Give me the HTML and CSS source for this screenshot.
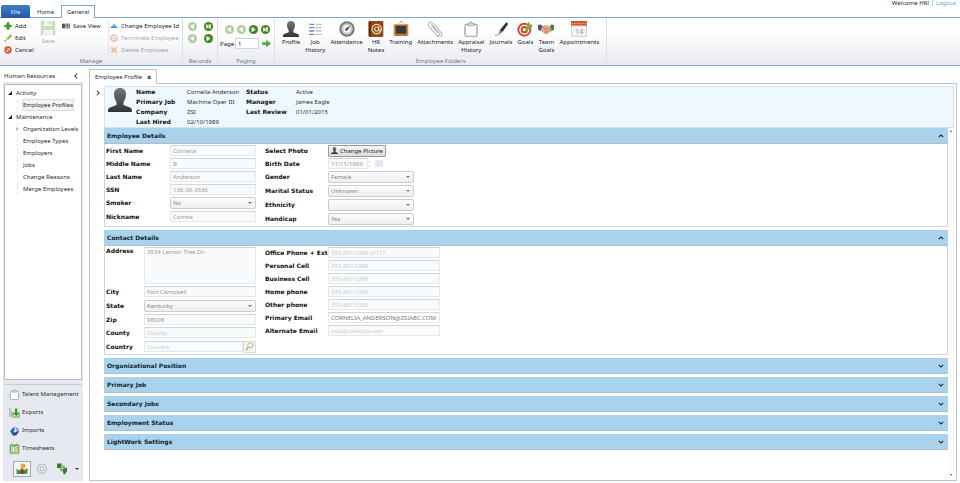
FILE: index.html
```html
<!DOCTYPE html>
<html lang="en">
<head>
<meta charset="utf-8">
<title>Employee Profile</title>
<link rel="stylesheet" href="styles.css">
</head>
<body>
<svg class="sprite" aria-hidden="true">
  <symbol id="person" viewBox="0 0 24 24"><path fill="url(#dark)" d="M12 0c4 0 6 2.600 6 6.500 0 3.500-1.200 5.500-2.500 7.500v3c2 1.400 5.500 1.600 7.500 3 .8.800 1 2 1 4H0c0-2 .2-3.200 1-4 2-1.400 5.500-1.600 7.500-3v-3C7.200 12 6 10 6 6.500 6 2.600 8 0 12 0z"/></symbol>
  <symbol id="nav-next" viewBox="0 0 24 24"><circle cx="12" cy="12" r="12" fill="#3f7f1d"/><circle cx="11" cy="11" r="7" fill="#5f9a3d"/><path fill="#fff" d="M7 5l10 7-10 7z"/></symbol>
  <symbol id="nav-prev" viewBox="0 0 24 24"><circle cx="12" cy="12" r="12" fill="#3f7f1d"/><circle cx="11" cy="11" r="7" fill="#5f9a3d"/><path fill="#fff" d="M16 5L6 12l10 7z"/></symbol>
  <symbol id="nav-last" viewBox="0 0 24 24"><circle cx="12" cy="12" r="12" fill="#3f7f1d"/><circle cx="11" cy="11" r="7" fill="#5f9a3d"/><path fill="#fff" d="M6 6l8 6-8 6zM14 6h4v12h-4z"/></symbol>
  <symbol id="clipboard" viewBox="0 0 24 24"><path fill="#fff" stroke="#999" stroke-width="1.600" d="M3 7q0-2 2-2h14q2 0 2 2v14q0 2-2 2H5q-2 0-2-2z"/><path fill="#ddd" stroke="#888" d="M7 7V4h3q0-3 2-3t2 3h3v3z"/><path stroke="#aaa" d="M3 10v10M21 10v10"/></symbol>
  <symbol id="up" viewBox="0 0 8 8"><path fill="none" stroke="#222" stroke-width="1.400" d="M1 5.500l3-3 3 3"/></symbol>
  <symbol id="down" viewBox="0 0 8 8"><path fill="none" stroke="#222" stroke-width="1.400" d="M1 2.500l3 3 3-3"/></symbol>
  <defs><linearGradient id="dark" x2="0" y2="1"><stop stop-color="#777"/><stop offset="1" stop-color="#333"/></linearGradient></defs>
</svg>

<header class="top">
  <nav class="tabs">
    <button class="tab file">File</button>
    <button class="tab">Home</button>
    <button class="tab active">General</button>
  </nav>
  <div class="user"><span>Welcome HR!</span><i></i><a href="#logout">Logout</a></div>
</header>

<section class="ribbon">
  <div class="group manage">
    <div class="tools">
      <div class="stack">
        <button class="tool"><svg viewBox="0 0 24 24"><path fill="#3f9a28" d="M8 1h8v7h7v8h-7v7H8v-7H1V8h7z"/></svg>Add</button>
        <button class="tool"><svg viewBox="0 0 24 24"><path fill="#8bc34a" d="M7 13L17 3l5 5-10 10z"/><path fill="#d56a5a" d="M17 3l2-2 5 5-2 2z"/><path fill="#e9c98b" d="M7 13l5 5-7 2z"/><path fill="#5a9a3a" d="M1 20l4-3 1 5-5 1z"/></svg>Edit</button>
        <button class="tool"><svg viewBox="0 0 24 24"><circle cx="12" cy="12" r="11" fill="#d9552b"/><circle cx="12" cy="12" r="6" fill="#fbe9e2"/><path stroke="#d9552b" stroke-width="4" d="M6 6l12 12"/></svg>Cancel</button>
      </div>
      <button class="big save off"><svg viewBox="0 0 24 24"><path fill="#7fae62" d="M1 1h5v8h12V1h5v22h-4v-8H5v8H1z"/><path fill="#d7e6cd" d="M7 1h10v7H7zM6 16h12v7H6z"/><path fill="#7fae62" d="M13 2h3v5h-3z"/></svg>Save</button>
      <div class="stack view">
        <button class="tool"><svg viewBox="0 0 24 16"><path fill="#555" d="M0 1h24v14H0z"/><path fill="#ccc" d="M9 3h6v3H9zM9 8h6v5H9zM17 3h5v4h-5zM17 9h5v4h-5z"/></svg>Save View</button>
      </div>
      <div class="stack divided">
        <button class="tool"><svg viewBox="0 0 24 24"><path fill="#58aee8" d="M12 5l8 10H4z"/><path fill="#3d93d6" d="M2 14h20v4H2z"/></svg>Change Employee Id</button>
        <button class="tool off"><svg viewBox="0 0 24 24"><circle cx="12" cy="12" r="9" fill="#fff" stroke="#e46a45" stroke-width="5"/><path stroke="#e46a45" stroke-width="3" d="M8 8l8 8M16 8l-8 8"/></svg>Terminate Employee</button>
        <button class="tool off"><svg viewBox="0 0 24 24"><path stroke="#e46a45" stroke-width="6" d="M4 4l16 16M20 4L4 20"/></svg>Delete Employee</button>
      </div>
    </div>
    <h2>Manage</h2>
  </div>
  <div class="group records">
    <div class="tools">
      <div class="navs">
        <button class="nav off" aria-label="First"><svg><use href="#nav-prev"/></svg></button>
        <button class="nav" aria-label="Last"><svg><use href="#nav-last"/></svg></button>
        <button class="nav off" aria-label="Previous"><svg><use href="#nav-prev"/></svg></button>
        <button class="nav" aria-label="Next"><svg><use href="#nav-next"/></svg></button>
      </div>
    </div>
    <h2>Records</h2>
  </div>
  <div class="group paging">
    <div class="tools">
      <div class="pages">
        <button class="nav off" aria-label="First page"><svg><use href="#nav-prev"/></svg></button>
        <button class="nav off" aria-label="Previous page"><svg><use href="#nav-prev"/></svg></button>
        <button class="nav" aria-label="Next page"><svg><use href="#nav-next"/></svg></button>
        <button class="nav" aria-label="Last page"><svg><use href="#nav-last"/></svg></button>
      </div>
      <div class="goto">
        <label for="page">Page</label><input id="page" value="1">
        <button class="nav" aria-label="Go"><svg viewBox="0 0 24 24"><path fill="#5aa83a" stroke="#3d8a22" d="M1 9h11V3l11 9-11 9v-6H1z"/></svg></button>
      </div>
    </div>
    <h2>Paging</h2>
  </div>
  <div class="group folders">
    <div class="tools">
      <button class="big"><svg><use href="#person"/></svg>Profile</button>
      <button class="big"><svg viewBox="0 0 24 24"><path stroke="#5d8fd0" stroke-width="2" d="M3 5h8M3 10h8M3 15h8M3 20h8"/><path stroke="#b9c3cf" stroke-width="2" d="M13 5h9M13 10h9M13 15h9M13 20h9"/><path stroke="#e08a70" stroke-width="2" d="M3 5h3M3 15h3"/></svg>Job<br>History</button>
      <button class="big"><svg viewBox="0 0 24 24"><circle cx="12" cy="12" r="10" fill="#d3d7da" stroke="#777" stroke-width="3"/><circle cx="12" cy="12" r="6.500" fill="#f8f8f8" stroke="#aaa"/><path fill="#444" d="M17 7l-4 7-3-3z"/><circle cx="11" cy="13" r="2" fill="#666"/></svg>Attendance</button>
      <button class="big"><svg viewBox="0 0 24 24"><rect x="1" width="22" height="24" rx="2" fill="#8d4a17"/><path fill="#5a2a08" d="M1 1h3v22H1z"/><circle cx="13" cy="12" r="7" fill="none" stroke="#f3d9b8" stroke-width="1.800"/><circle cx="13" cy="12" r="3" fill="none" stroke="#f3d9b8" stroke-width="1.800"/><path fill="none" stroke="#f3d9b8" stroke-width="1.800" d="M16 8v6q2 2 4-1"/></svg>HR<br>Notes</button>
      <button class="big"><svg viewBox="0 0 24 24"><path stroke="#9ab" d="M12 1L6 5M12 1l6 4"/><circle cx="12" cy="1" r="1" fill="#58a"/><rect x="1" y="5" width="22" height="17" rx="1" fill="#d58b2e"/><path fill="#353b40" d="M4 7h16v12H4z"/><path fill="#b06b1c" d="M3 20h18v2H3z"/></svg>Training</button>
      <button class="big"><svg viewBox="0 0 24 24"><path fill="none" stroke="#b4b4b4" stroke-width="1.600" d="M6 4l12 14c2 3-2 6-4 3L3 8C0 3 6-1 9 3l12 14c4 6-3 9-5 6M7 7l9 11"/></svg>Attachments</button>
      <button class="big"><svg><use href="#clipboard"/></svg>Appraisal<br>History</button>
      <button class="big"><svg viewBox="0 0 24 24"><path fill="#333" d="M20 2l3 2-9 13-4-3z"/><path fill="#888" d="M10 14l4 3-6 4z"/><path stroke="#666" d="M3 22l6-2"/></svg>Journals</button>
      <button class="big"><svg viewBox="0 0 24 24"><circle cx="11" cy="13" r="9" fill="#fff" stroke="#d9472b" stroke-width="3"/><circle cx="11" cy="13" r="4" fill="#fff" stroke="#d9472b" stroke-width="3"/><path fill="#76b043" d="M12 14l5-13 3 4 4 2-9 8z"/></svg>Goals</button>
      <button class="big"><svg viewBox="0 0 28 24"><path fill="#e0a98a" d="M5 7l9-2 9 3 1 7-8 6-5-1-7-6z"/><path fill="#4d5a63" d="M0 5l5-1 3 3-4 9-4-3z"/><path fill="#4f7a45" d="M28 5l-5-1-2 3 3 9 4-3z"/><path fill="none" stroke="#a86c50" d="M9 8l4 5 4-3 5 5M11 19l3-4M14 20l3-4"/></svg>Team<br>Goals</button>
      <button class="big"><svg viewBox="0 0 24 24"><path fill="#f4f4f4" stroke="#bbb" d="M1 5h22v18H1z"/><path fill="#d9552b" d="M0 0h24v7H0z"/><path stroke="#fff" stroke-dasharray="2 2" d="M1 4h22"/><text x="6" y="19" font-size="11" fill="#999">14</text></svg>Appointments</button>
    </div>
    <h2>Employee Folders</h2>
  </div>
</section>

<main class="work">
  <aside class="side">
    <div class="side-head"><span>Human Resources</span><button aria-label="Collapse"><svg class="chev" viewBox="0 0 8 8"><path fill="none" stroke="#222" stroke-width="1.400" d="M5.500 1l-3 3 3 3"/></svg></button></div>
    <div class="side-body">
      <nav class="tree">
        <a href="#activity" class="root">Activity</a>
        <div class="branch"><a href="#profiles" class="current">Employee Profiles</a></div>
        <a href="#maintenance" class="root">Maintenance</a>
        <div class="branch">
          <a href="#levels" class="closed">Organization Levels</a>
          <a href="#types">Employee Types</a>
          <a href="#employers">Employers</a>
          <a href="#jobs">Jobs</a>
          <a href="#reasons">Change Reasons</a>
          <a href="#merge">Merge Employees</a>
        </div>
      </nav>
      <nav class="modules">
        <a href="#talent"><svg><use href="#clipboard"/></svg>Talent Management</a>
        <a href="#exports"><svg viewBox="0 0 24 24"><path fill="none" stroke="#999" stroke-width="2" d="M2 1v21M6 8v14"/><path fill="none" stroke="#7ab04e" stroke-width="3" d="M9 11v9q0 2 2 2h9q2 0 2-2v-9"/><path fill="#3f8f22" d="M13 3h5v10h4l-6 7-7-7h4z"/></svg>Exports</a>
        <a href="#imports"><svg viewBox="0 0 24 24"><path fill="#2f68b5" d="M2 13l9-9 2 6-3 4 4 3 8-4-6 10H8z"/><path fill="#7ba7dd" d="M13 2l9 7-2 7-6 1 2-6z"/><path fill="#1d4787" d="M8 23l8-2 6-8-9 4z"/></svg>Imports</a>
        <a href="#timesheets"><svg viewBox="0 0 24 24"><path fill="#e9f2e0" stroke="#78aa4f" stroke-width="3" d="M3 5h18v17H3z"/><circle cx="12" cy="13" r="6" fill="#fff" stroke="#78aa4f" stroke-width="2"/><path stroke="#78aa4f" stroke-width="2" d="M7 1v6M17 1v6M12 9v4l3 2"/></svg>Timesheets</a>
      </nav>
      <div class="switch">
        <button class="on" aria-label="Human Resources"><svg viewBox="0 0 24 24"><circle cx="14" cy="6" r="5" fill="#f2a23a"/><path fill="#4d8f3a" d="M1 12l6 3 5-5 4 4 7-4v9q0 3-3 3H4q-3 0-3-3z"/><path fill="#75502f" d="M8 15l4-4 4 5-1 6H9z"/></svg></button>
        <button aria-label="Settings"><svg viewBox="0 0 24 24"><circle cx="12" cy="12" r="9" fill="#ececec" stroke="#bbb" stroke-width="3" stroke-dasharray="4 1"/><circle cx="12" cy="12" r="4" fill="#fff" stroke="#aaa" stroke-width="2"/></svg></button>
        <button aria-label="Links"><svg viewBox="0 0 24 24"><path fill="#3b7d2b" d="M2 1h9v9H2zM12 12l10-3v8l-6 7z"/><path fill="#86b86f" d="M6 11h6v6H9zM12 5h6v5h-6z"/></svg></button>
        <button class="more" aria-label="More"></button>
      </div>
    </div>
  </aside>

  <section class="pane">
    <div class="doc-tabs"><button class="doc-tab">Employee Profile <b>x</b></button></div>
    <div class="doc">
      <button class="expand" aria-label="Expand"><svg class="chev" viewBox="0 0 8 8"><path fill="none" stroke="#222" stroke-width="1.400" d="M2.500 1l3 3-3 3"/></svg></button>
      <div class="content">
        <div class="summary">
          <svg><use href="#person"/></svg>
          <dl>
            <dt>Name</dt><dd>Cornelia Anderson</dd><dt>Status</dt><dd>Active</dd>
            <dt>Primary Job</dt><dd>Machine Oper III</dd><dt>Manager</dt><dd>James Eagle</dd>
            <dt>Company</dt><dd>ZSI</dd><dt>Last Review</dt><dd>01/01/2015</dd>
            <dt>Last Hired</dt><dd>02/10/1989</dd>
          </dl>
        </div>
        <div class="scroller">
          <div class="sections">
            <article class="open">
              <button class="bar">Employee Details<svg class="chev"><use href="#up"/></svg></button>
              <div class="form details">
                <div class="col">
                  <div class="row"><label for="first">First Name</label><input id="first" value="Cornelia"></div>
                  <div class="row"><label for="middle">Middle Name</label><input id="middle" value="B"></div>
                  <div class="row"><label for="last">Last Name</label><input id="last" value="Anderson"></div>
                  <div class="row"><label for="ssn">SSN</label><input id="ssn" value="136-36-3636"></div>
                  <div class="row pick"><label for="smoker">Smoker</label><span class="select"><select id="smoker"><option>No</option></select></span></div>
                  <div class="row"><label for="nick">Nickname</label><input id="nick" value="Connie"></div>
                </div>
                <div class="col">
                  <div class="row"><label for="photo">Select Photo</label><button id="photo" class="photo"><svg><use href="#person"/></svg>Change Picture</button></div>
                  <div class="row"><label for="birth">Birth Date</label><span class="date"><input id="birth" value="11/11/1960"><i></i><em></em></span></div>
                  <div class="row pick"><label for="gender">Gender</label><span class="select"><select id="gender"><option>Female</option></select></span></div>
                  <div class="row pick"><label for="marital">Marital Status</label><span class="select"><select id="marital"><option>Unknown</option></select></span></div>
                  <div class="row pick"><label for="ethnic">Ethnicity</label><span class="select"><select id="ethnic"><option></option></select></span></div>
                  <div class="row pick"><label for="handicap">Handicap</label><span class="select"><select id="handicap"><option>Yes</option></select></span></div>
                </div>
              </div>
            </article>
            <article class="open">
              <button class="bar">Contact Details<svg class="chev"><use href="#up"/></svg></button>
              <div class="form contact">
                <div class="col">
                  <div class="row tall"><label for="address">Address</label><textarea id="address">3534 Lemon Tree Dr.</textarea></div>
                  <div class="row"><label for="city">City</label><input id="city" value="Fort Campbell"></div>
                  <div class="row pick"><label for="state">State</label><span class="select"><select id="state"><option>Kentucky</option></select></span></div>
                  <div class="row"><label for="zip">Zip</label><input id="zip" value="98008"></div>
                  <div class="row"><label for="county">County</label><input id="county" placeholder="County"></div>
                  <div class="row pick"><label for="country">Country</label><span class="lookup"><input id="country" placeholder="Country"><button aria-label="Find country"><svg viewBox="0 0 24 24"><circle cx="14" cy="9" r="7" fill="#f4f9ee" stroke="#8fac6f" stroke-width="2"/><path stroke="#b0874f" stroke-width="3" d="M9 14l-7 8"/></svg></button></span></div>
                </div>
                <div class="col">
                  <div class="row"><label for="office">Office Phone + Ext</label><input id="office" class="hint" placeholder="555-867-5309 x1111"></div>
                  <div class="row"><label for="pcell">Personal Cell</label><input id="pcell" class="hint" placeholder="555-867-5309"></div>
                  <div class="row"><label for="bcell">Business Cell</label><input id="bcell" class="hint" placeholder="555-867-5309"></div>
                  <div class="row"><label for="hphone">Home phone</label><input id="hphone" class="hint" placeholder="555-867-5309"></div>
                  <div class="row"><label for="ophone">Other phone</label><input id="ophone" class="hint" placeholder="555-867-5309"></div>
                  <div class="row"><label for="email">Primary Email</label><input id="email" class="strong" value="CORNELIA_ANDERSON@ZSIABC.COM"></div>
                  <div class="row"><label for="email2">Alternate Email</label><input id="email2" class="hint" placeholder="me2@example.com"></div>
                </div>
              </div>
            </article>
            <article><button class="bar">Organizational Position<svg class="chev"><use href="#down"/></svg></button></article>
            <article><button class="bar">Primary Job<svg class="chev"><use href="#down"/></svg></button></article>
            <article><button class="bar">Secondary Jobs<svg class="chev"><use href="#down"/></svg></button></article>
            <article><button class="bar">Employment Status<svg class="chev"><use href="#down"/></svg></button></article>
            <article><button class="bar">LightWork Settings<svg class="chev"><use href="#down"/></svg></button></article>
          </div>
          <div class="track"><i class="tri-up"></i><i class="tri-down"></i></div>
        </div>
      </div>
    </div>
  </section>
</main>
</body>
</html>
```
FILE: styles.css
```css
* { box-sizing: border-box; }
html, body { height: 100%; margin: 0; }
body {
  display: flex;
  flex-direction: column;
  font: 6px/8px "Noto Sans", sans-serif;
  color: #2a2a2a;
  background: #fff;
  overflow: hidden;
}
button, input, select, textarea {
  font: inherit;
  color: inherit;
  margin: 0;
  padding: 0;
  border: 0;
  background: none;
  border-radius: 0;
  min-width: 0;
  outline: 0;
}
button { display: flex; align-items: center; text-align: left; white-space: nowrap; }
a { color: inherit; text-decoration: none; }
h2 { margin: 0; font-size: 6px; font-weight: 400; text-align: center; color: #777; }
svg { flex: none; }
.sprite { position: absolute; width: 0; height: 0; }
.off { opacity: .4; }
.chev { width: 6px; height: 6px; }

.top { display: flex; justify-content: space-between; height: 17px; padding: 0 4px 0 1px; }
.tabs { display: flex; align-items: flex-end; z-index: 1; margin-bottom: -1px; }
.tab { justify-content: center; width: 31px; height: 13px; }
.tab.file { width: 29px; color: #dfeaff; background: linear-gradient(#3d7cc9, #2658a8); border-radius: 2px 2px 0 0; }
.tab.active { width: 34px; background: #fff; border: 1px solid #7fa6cc; border-bottom: 0; }
.user { display: flex; gap: 3px; height: 6px; line-height: 6px; color: #222; }
.user i { width: 1px; background: #ccc; }
.user a { color: #5da7e0; }

.ribbon {
  display: flex;
  height: 49px;
  flex: none;
  border-top: 1px solid #7fa6cc;
  border-bottom: 1px solid #7fa6cc;
  background: linear-gradient(#fff 30%, #e7e9ee);
  color: #222;
}
.group { display: flex; flex-direction: column; border-right: 1px solid #dcdfe5; }
.group h2 { margin-top: auto; }
.tools { display: flex; padding: 2px 4px 0; }
.manage { width: 183px; }
.manage .tools { padding-right: 0; }
.records { width: 35px; }
.paging { width: 57px; }
.stack { display: flex; flex-direction: column; width: 34px; }
.tool { height: 12px; gap: 3px; }
.tool svg { width: 8px; height: 8px; }
.stack.view { width: 46px; }
.view svg { width: 8px; height: 6px; }
.save { width: 20px; margin-right: 4px; }
.stack.divided { width: auto; padding-left: 1px; border-left: 1px solid #e4e6ea; }
.navs { display: grid; grid-template-columns: 9px 9px; gap: 3px 7px; padding: 2px 0 0 1px; }
.nav svg { width: 9px; height: 9px; display: block; }
.paging .tools { flex-direction: column; gap: 4px; padding: 7px 2px 0; }
.pages { display: flex; gap: 3px; padding-left: 5px; }
.goto { display: flex; align-items: center; gap: 1px; }
.goto input { width: 24px; height: 11px; padding-left: 2px; border: 1px solid #c3d6e8; background: #fff; margin-right: 2px; }
.folders .tools { gap: 5px; padding: 3px 7px 0; }
.big { flex-direction: column; text-align: center; line-height: 8px; }
.big svg { width: 16px; height: 16px; margin-bottom: 1px; }

.work { display: flex; flex: 1; gap: 6px; min-height: 0; padding: 3px 3px 2px; }
.side { display: flex; flex-direction: column; width: 80px; flex: none; }
.side-head { display: flex; justify-content: space-between; align-items: center; height: 13px; padding: 0 4px 0 1px; }
.side-body { flex: 1; display: flex; flex-direction: column; padding: 2px 1px 0; background: #e6eaf0; }
.tree { flex: 1; padding: 2px; background: #fff; border: 1px solid #b5bcc6; margin-bottom: 4px; }
.tree a { display: flex; align-items: center; width: max-content; height: 12px; white-space: nowrap; }
.root::before { content: ""; border: 2px solid transparent; border-right-color: #222; border-bottom-color: #222; margin: 0 4px 0 1px; }
.branch { margin-left: 10px; border-left: 1px dotted #ddd; padding-left: 5px; }
.branch .current { height: 10px; margin: 1px 0; outline: 1px solid #ddd; background: #f3f3f3; }
.branch .closed { margin-left: -7px; }
.branch .closed::before { content: ""; border: 2px solid transparent; border-left: 3px solid #bbb; border-right: 0; margin-right: 4px; }
.modules { border-top: 1px solid #c6ccd5; }
.modules a { display: flex; align-items: center; gap: 2px; height: 18px; padding-left: 5px; }
.modules svg { width: 11px; height: 11px; }
.switch { display: flex; align-items: center; gap: 2px; height: 24px; padding-left: 9px; }
.switch button { justify-content: center; width: 18px; height: 16px; }
.switch svg { width: 12px; height: 12px; }
.switch .on { border: 1px solid #aaa; background: #f5f5f5; }
.switch .more { width: 8px; }
.more::after { content: ""; border: 2px solid transparent; border-top-color: #333; border-bottom: 0; }

.pane { display: flex; flex-direction: column; flex: 1; min-width: 0; }
.doc-tabs { display: flex; margin-bottom: -1px; z-index: 1; }
.doc-tab { gap: 5px; height: 15px; padding: 0 5px; background: #fff; border: 1px solid #b9c5d1; border-bottom: 0; }
.doc { display: flex; flex: 1; min-height: 0; padding: 2px 2px 2px 3px; border: 1px solid #b9c5d1; }
.expand { align-self: flex-start; width: 11px; height: 14px; padding-left: 2px; }
.content { display: flex; flex-direction: column; flex: 1; min-width: 0; }
.summary { display: flex; flex: none; gap: 4px; height: 42px; padding: 0 3px; background: #f0f8ff; border: 1px solid #cfe3f0; }
.summary svg { width: 24px; height: 24px; margin-top: 1px; }
.summary dl { display: grid; grid-template-columns: 51px 59px 50px 60px; grid-auto-rows: 10px; align-items: center; margin: 0; }
dt, .row label, .bar, .doc-tab b { font-family: "DejaVu Sans", sans-serif; font-weight: 700; color: #111; white-space: nowrap; }
dd { margin: 0; white-space: nowrap; }
.scroller { display: flex; flex: 1; min-height: 0; }
.sections { display: flex; flex-direction: column; gap: 3px; flex: 1; min-width: 0; }
.bar {
  justify-content: space-between;
  width: 100%;
  height: 16px;
  padding: 0 4px 0 3px;
  color: #12242f;
  background: #a9d3ed;
  border-bottom: 1px solid #b4bcc2;
}
.form { display: flex; gap: 9px; padding: 0 1px; border: 1px solid #cfd4d8; border-top: 0; }
.row { display: flex; align-items: center; height: 13px; color: #999; }
.row.pick { height: 14px; }
.contact .row.pick { height: 15px; }
.row label { width: 64px; flex: none; }
.col:last-child label { width: 63px; }
.contact .col:first-child label { width: 38px; }
.row input, .row textarea { width: 86px; height: 11px; padding: 0 2px; background: #f9fafb; border: 1px solid #e3e8ed; border-top-color: #ccd6de; }
.contact .row input { width: 112px; }
.row textarea { width: 112px; height: 37px; resize: none; overflow: hidden; display: block; }
.row.tall { height: 39px; align-items: flex-start; padding-top: 1px; }
.select { position: relative; width: 86px; height: 12px; }
.contact .select { width: 112px; }
.select select { appearance: none; width: 100%; height: 100%; padding: 0 2px; border: 1px solid #ccc; border-radius: 2px; background: linear-gradient(#fbfbfb, #efefef); color: #888; }
.select::after { content: ""; position: absolute; right: 4px; top: 5px; border: 2px solid transparent; border-top-color: #777; border-bottom: 0; pointer-events: none; }
.photo { gap: 2px; height: 12px; padding: 0 2px; border: 1px solid #999; border-radius: 1px; background: linear-gradient(#f6f6f6, #ddd); color: #222; }
.photo svg { width: 7px; height: 7px; }
.date, .lookup { display: flex; align-items: center; }
.date input { width: 40px; }
.date i { width: 3px; height: 6px; border: 1px solid #ddd; border-width: 1px 0; margin-right: 4px; }
.date em { width: 8px; height: 7px; background: #e4e8f3; }
.contact .lookup input { width: 99px; }
.lookup button { justify-content: center; width: 13px; height: 12px; border: 1px solid #ddd; background: #f5f5f5; }
.lookup svg { width: 9px; height: 9px; }
::placeholder { color: #ccc; opacity: 1; }
.hint::placeholder { font-style: italic; }
.row .strong { color: #777; background: #fff; }
.track { display: flex; flex-direction: column; justify-content: space-between; align-items: center; width: 6px; padding: 2px 0; background: #fafafa; }
.tri-up { border: 1px solid transparent; border-bottom: 2px solid #555; border-top: 0; }
.tri-down { border: 1px solid transparent; border-top: 2px solid #555; border-bottom: 0; }
```
